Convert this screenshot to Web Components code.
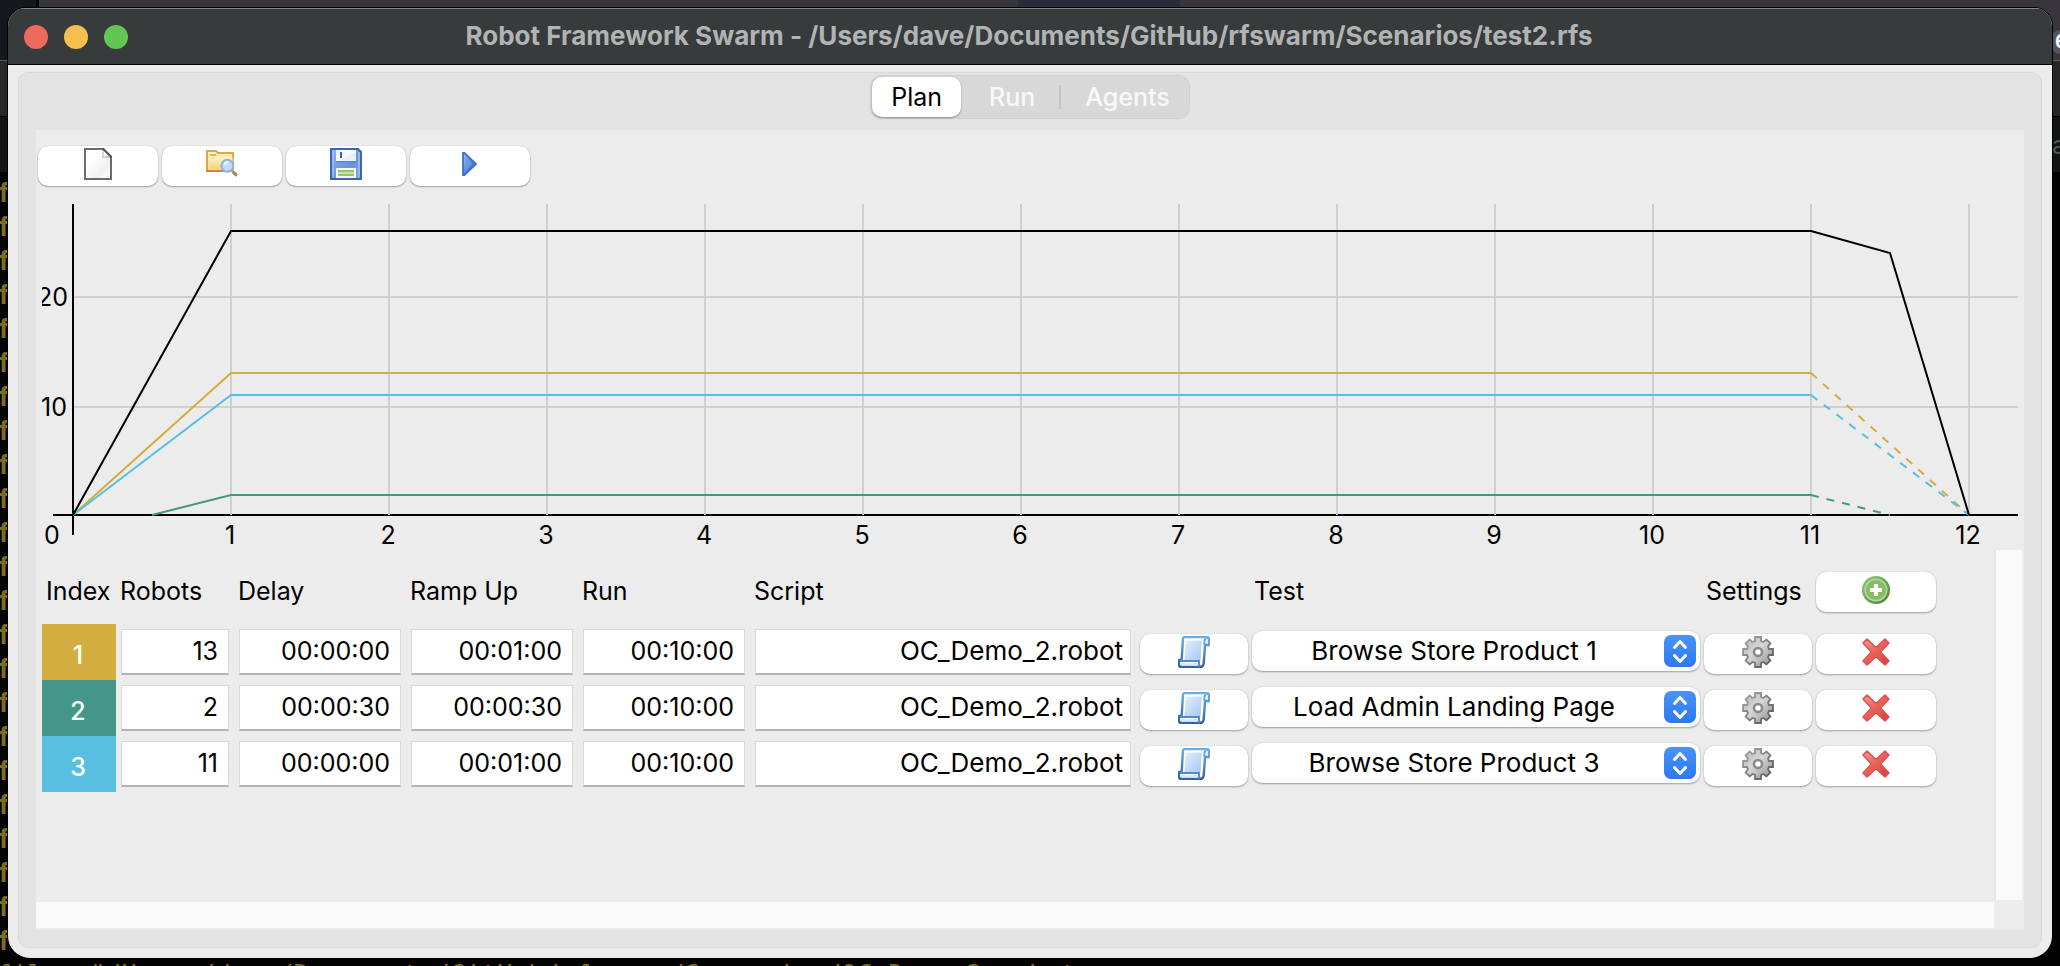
<!DOCTYPE html>
<html lang="en">
<head>
<meta charset="utf-8">
<title>Robot Framework Swarm</title>
<style>
html, body { margin: 0; height: 100%; }
body { box-sizing: border-box; padding: 8px; background: #000; overflow: hidden; font-family: Inter, Roboto, "Liberation Sans", sans-serif; font-size: 25px; line-height: 32px; color: #000; display: flex; }
</style>
</head>
<body>
<desktop-backdrop></desktop-backdrop>
<app-window heading="Robot Framework Swarm - /Users/dave/Documents/GitHub/rfswarm/Scenarios/test2.rfs">
  <tab-book>
    <tool-bar>
      <icon-button icon="new" label="New"></icon-button>
      <icon-button icon="open" label="Open"></icon-button>
      <icon-button icon="save" label="Save"></icon-button>
      <icon-button icon="play" label="Play"></icon-button>
    </tool-bar>
    <plan-chart></plan-chart>
    <scroll-pane><scenario-table></scenario-table></scroll-pane>
  </tab-book>
</app-window>
<script>
const icons = {
  new: `<defs><linearGradient id="g" x1="0" y1="0" x2="1" y2="1"><stop offset=".3" stop-color="#fff"/><stop offset=".7" stop-color="#f1f1f1"/><stop offset="1" stop-color="#fff"/></linearGradient></defs>
    <path d="M1.5.5h9l4 4v11h-13z" fill="url(#g)" stroke="#6c6c6c"/><path d="M10.5 1v3.500h3.500" fill="#fff" stroke="#c4c4c4" stroke-width=".7"/><path d="M10 .5h.7L14.500 4.300V5" fill="none" stroke="#555"/>`,
  open: `<defs><linearGradient id="g" x1="0" y1="0" x2="0" y2="1"><stop offset="0" stop-color="#fdf3cf"/><stop offset="1" stop-color="#f4cd62"/></linearGradient></defs>
    <path d="M.5 11.500V1.500h4.500l1 1h7.500v9z" fill="url(#g)" stroke="#dda748"/><path d="M2 3.500h3M6 5h6" stroke="#e3b75b" fill="none"/><path d="M1.500 6h3l1-1.200h7.500V11H1.500z" fill="url(#g)" stroke="#fff3c4" stroke-width=".5"/><path d="M0 11.500h10" stroke="#cf8433"/>
    <circle cx="10.700" cy="8.900" r="3" fill="#c4daf5" stroke="#8fb2e3"/><path d="M9.200 8.500q.5-1.500 2-1.500" stroke="#eef6ff" fill="none"/><path d="M12.800 11.300l1 1" stroke="#9a9a9a"/><path d="M13.600 12.100l1.800 1.700" stroke="#b07d4f" stroke-width="1.600"/>`,
  save: `<defs><linearGradient id="g" x1="0" y1="0" x2="1" y2="1"><stop offset="0" stop-color="#8db3ea"/><stop offset=".6" stop-color="#6a94d8"/><stop offset="1" stop-color="#86a9e2"/></linearGradient></defs>
    <path d="M.5.5h13.500l1.500 1.500v13.500H.5z" fill="url(#g)" stroke="#3a66b5"/><path d="M1.500 1.500v13M14.500 2v12.500" stroke="#9dbdf0" stroke-width=".8"/><path d="M3 1h10v5.500H3z" fill="#e9effa"/><path d="M3 3l4-2h6v1L5 6.500H3z" fill="#fff" opacity=".6"/><path d="M5.500 2v3" stroke="#3b5ea4"/><path d="M3 6.800h10" stroke="#5682cc" stroke-width=".6"/>
    <path d="M3 10h10v5H3z" fill="#fbfdf8"/><path d="M4 11.500h8M4 13.500h8" stroke="#96c66c"/><path d="M4 12.500h8" stroke="#c7e2ad"/>`,
  play: `<defs><linearGradient id="g" x1="0" y1="0" x2="1" y2="1"><stop offset="0" stop-color="#a5c8f4"/><stop offset=".6" stop-color="#4b80da"/><stop offset="1" stop-color="#2a5cc4"/></linearGradient></defs>
    <path d="M4.500 2.500h.7L11 8l-5.800 5.500h-.7z" fill="url(#g)" stroke="#3e6fd0" stroke-width=".9"/><path d="M5.500 4v7.500L9 8z" fill="#6d9ae4" opacity=".7"/>`,
  script: `<defs><linearGradient id="g" x1="0" y1="0" x2="0" y2="1"><stop offset="0" stop-color="#66afe5"/><stop offset="1" stop-color="#35629f"/></linearGradient><linearGradient id="h" x1="0" y1="0" x2="1" y2="1"><stop offset="0" stop-color="#e6f1fd"/><stop offset=".5" stop-color="#c2dbf8"/><stop offset="1" stop-color="#a9caf3"/></linearGradient></defs>
    <path d="M2.500 1.200Q2.700.5 3.500.5h10.700q1.300 0 1.300 1.400V4.500H13.500l-.6 8.700q-.2 2.300-1.700 2.300H1.500Q.5 15.500.5 14v-2h1.300z" fill="#fff" stroke="url(#g)" stroke-width="1.200"/>
    <path d="M3.800 2.200h8.200l-.7 9.800H3.200z" fill="url(#h)"/><path d="M13.300 4.500l-.1-2q.1-1 1-1" fill="none" stroke="#5fa1dc"/><path d="M1 12.500h9.500v1.500q0 .8.700 1.200" fill="none" stroke="#5d87c4"/><path d="M1.500 14h8.500" stroke="#d8e7fa"/>`,
  gear: `<defs><linearGradient id="g" x1="0" y1="0" x2="1" y2="1"><stop offset="0" stop-color="#b5b5b5"/><stop offset=".45" stop-color="#d6d6d6"/><stop offset="1" stop-color="#8a8a8a"/></linearGradient><linearGradient id="h" x1="0" y1="0" x2="1" y2="1"><stop offset="0" stop-color="#ababab"/><stop offset="1" stop-color="#555"/></linearGradient></defs>
    <path d="M6.500.5h3v2l1.200.5 1.500-1.300 2 2L13 5.300l.5 1.200h2v3h-2l-.5 1.200 1.200 1.500-2 2-1.500-1.200-1.200.5v2h-3v-2l-1.200-.5-1.500 1.200-2-2L3 10.700l-.5-1.200h-2v-3h2L3 5.300 1.800 3.700l2-2L5.300 3l1.200-.5z" fill="url(#g)" stroke="url(#h)" stroke-width=".9"/><circle cx="8" cy="8" r="2" fill="#fff" stroke="#8b8b8b" stroke-width="1.300"/>`,
  remove: `<defs><linearGradient id="g" x1="0" y1="0" x2="1" y2="1"><stop offset="0" stop-color="#f39a96"/><stop offset=".5" stop-color="#e8605b"/><stop offset="1" stop-color="#d63a34"/></linearGradient></defs>
    <path d="M3.500 1.500L8 5.800l4.500-4.300 2 2L10.300 8l4.200 4.500-2 2L8 10.300l-4.500 4.200-2-2L5.700 8 1.500 3.500z" fill="url(#g)" stroke="#df534e" stroke-width=".8" stroke-linejoin="round"/>`,
  add: `<defs><linearGradient id="g" x1="0" y1="0" x2="1" y2="1"><stop offset="0" stop-color="#9dc77f"/><stop offset="1" stop-color="#457f34"/></linearGradient></defs>
    <circle cx="8" cy="8" r="7" fill="url(#g)"/><circle cx="8" cy="8" r="5.400" fill="#84bd63" stroke="#b0d698" stroke-width=".8"/><path d="M8 5v6M5 8h6" stroke="#fff" stroke-width="2"/>`
};

function define(name, html, setup) {
  const template = document.createElement('template');
  template.innerHTML = html;
  customElements.define(name, class extends HTMLElement {
    connectedCallback() {
      if (this.shadowRoot) return;
      this.attachShadow({ mode: 'open' }).append(template.content.cloneNode(true));
      if (setup) setup(this, this.shadowRoot);
    }
  });
}

/* Other windows and the terminal behind the main window */
define('desktop-backdrop', `<style>
  :host { position: absolute; inset: 0; overflow: hidden; color: #7c6c1d; font: 26px/34px "DejaVu Sans Mono", monospace; white-space: pre; display: flex; flex-direction: column; }
  .top, .bar, .tabs { flex: none; }
  .top { height: 60px; background: linear-gradient(90deg, #14181d 36px, #000 36px, #000 39px, #38353d 39px, #38353d 1018px, #2a2b3b 1018px, #2a2b3b 1180px, #38353d 1180px); display: flex; justify-content: flex-end; align-items: center; }
  .bar { height: 55px; background: #252827; border-top: 1px solid #5a5c5c; border-bottom: 1px solid #000; }
  .tabs { height: 55px; background: #131515; display: flex; justify-content: flex-end; align-items: center; color: #555; font: 25px/32px Inter, sans-serif; }
  .tabs span { width: 8px; overflow: hidden; }
  .badge { width: 8px; height: 24px; overflow: hidden; background: #55545f; color: #fff; font: 700 19px/24px Inter, sans-serif; margin-top: 24px; text-indent: 3px; border-radius: 8px 0 0 8px; }
  .terminal { background: #030303; flex: 1; min-height: 0; padding-top: 4px; }
  .terminal div { height: 34px; text-indent: -4px; font-weight: 700; }
  .terminal div:last-child { font-weight: 400; }
</style>
<div class="top"><span class="badge">6</span></div><div class="bar"></div><div class="tabs"><span>a</span></div>
<div class="terminal"></div>`, (host, root) => {
  const term = root.querySelector('.terminal');
  for (let i = 0; i < 24; i++) {
    const line = document.createElement('div');
    line.textContent = i < 23 ? 'f' : 'file: "/Users/dave/Documents/GitHub/rfswarm/Scenarios/OC_Demo_2.robot';
    term.append(line);
  }
});

define('app-window', `<style>
  :host { position: relative; flex: 1; display: flex; flex-direction: column; border-radius: 18px 18px 22px 22px; background: #ececec; overflow: hidden; box-shadow: 0 0 0 1px #000; }
  header { height: 57px; box-sizing: border-box; background: #383b3b; border-top: 1px solid #868888; border-bottom: 1px solid #000; display: grid; grid-template-columns: 1fr auto 1fr; align-items: center; padding: 0 18px 0 16px; }
  .lights { display: flex; gap: 16px; }
  .lights button { width: 24px; height: 24px; border: 0; padding: 0; border-radius: 50%; }
  .close { background: #ec6a5e; } .min { background: #f5bf4f; } .max { background: #62c655; }
  h1 { margin: 0; padding-bottom: 2px; font-size: 26px; line-height: 32px; font-weight: 700; color: #b0b4b4; white-space: nowrap; }
  main { flex: 1; display: flex; padding: 7px 10px 10px; }
</style>
<header><div class="lights"><button class="close" aria-label="Close"></button><button class="min" aria-label="Minimise"></button><button class="max" aria-label="Zoom"></button></div><h1></h1></header>
<main><slot></slot></main>`, (host, root) => {
  root.querySelector('h1').textContent = host.getAttribute('heading');
});

define('tab-book', `<style>
  :host { flex: 1; min-width: 0; box-sizing: border-box; display: flex; flex-direction: column; background: #e3e3e3; border: 1px solid #d9d9d9; border-radius: 10px; padding: 2px 17px 17px; }
  nav { align-self: center; display: flex; align-items: center; height: 44px; border-radius: 12px; background: #d8d8d8; box-shadow: inset 0 0 1px 1px #d0d0d0; margin-bottom: 11px; }
  button { font: inherit; border: 0; background: none; padding: 0 20px 0 24px; height: 40px; color: #f8f8f8; font-weight: 500; }
  button[aria-selected=true] { background: #fff; color: #000; font-weight: 400; border-radius: 10px; padding: 0 19px; margin-left: 2px; box-shadow: 0 1px 2px rgba(0,0,0,.35); }
  nav button:nth-child(2) { padding: 0 24px 0 28px; }
  .rule { width: 2px; height: 24px; background: #c4c4c4; }
  section { flex: 1; background: #ececec; display: flex; flex-direction: column; padding-top: 16px; }
</style>
<nav role="tablist"><button role="tab" aria-selected="true">Plan</button><button role="tab" aria-selected="false">Run</button><span class="rule"></span><button role="tab" aria-selected="false">Agents</button></nav>
<section role="tabpanel"><slot></slot></section>`);

define('tool-bar', `<style>
  :host { display: flex; gap: 4px; padding: 0 2px; margin-bottom: 18px; }
  ::slotted(icon-button) { width: 120px; }
</style><slot></slot>`);

define('icon-button', `<style>
  :host { display: block; height: 40px; }
  button { display: flex; justify-content: center; width: 100%; height: 40px; border: 0; border-radius: 10px; background: #fff; padding: 2px 0 6px; box-shadow: 0 1px 2px rgba(0,0,0,.32), 0 0 1px rgba(0,0,0,.2); }
  svg { width: 32px; height: 32px; }
</style><button><svg viewBox="0 0 16 16" aria-hidden="true"></svg></button>`, (host, root) => {
  root.querySelector('svg').innerHTML = icons[host.getAttribute('icon')];
  root.querySelector('button').setAttribute('aria-label', host.getAttribute('label'));
});

/* Robots over time: one line per scenario row, and their total in black */
define('plan-chart', `<style>
  :host { display: block; height: 346px; margin: 0 4px 0 6px; }
  svg { display: block; width: 100%; height: 346px; overflow: hidden; }
  text { font-size: 25px; fill: #000; }
  polyline, path { fill: none; stroke-width: 2; }
</style><svg role="img" aria-label="Planned robots over time"></svg>`, (host, root) => {
  const svg = root.querySelector('svg');
  const draw = () => {
    const width = host.clientWidth, left = 31, base = 311;
    const step = Math.round((width - 82) / 12);
    const x = minute => left + minute * step;
    const line = (colour, points, dash) => `<polyline stroke="${colour}" ${dash ? 'stroke-dasharray="8 8"' : ''} points="${points.map(([m, h]) => x(m) + ',' + (base - h)).join(' ')}"/>`;
    let out = `<path stroke="#000" d="M11 ${base}H${width - 2}M${left} 0V331"/>`;
    for (let m = 1; m <= 12; m++) out += `<path stroke="#cfcfcf" d="M${x(m)} 0V${base}"/><text x="${x(m) - 1}" y="340" text-anchor="middle">${m}</text>`;
    out += `<path stroke="#cfcfcf" d="M${left + 1} 203H${width - 2}M${left + 1} 93H${width - 2}"/>`;
    out += `<text x="26" y="102" text-anchor="end">20</text><text x="25" y="212" text-anchor="end">10</text><text x="10" y="340" text-anchor="middle">0</text>`;
    out += line('#d1ae3f', [[0, 0], [1, 142], [11, 142]]) + line('#d1ae3f', [[11, 142], [12, 0]], true);
    out += line('#449788', [[.5, 0], [1, 20], [11, 20]]) + line('#449788', [[11, 20], [11.5, 0]], true);
    out += line('#59bfe1', [[0, 0], [1, 120], [11, 120]]) + line('#59bfe1', [[11, 120], [12, 0]], true);
    out += line('#000', [[0, 0], [1, 284], [11, 284], [11.5, 262], [12, 0]]);
    svg.innerHTML = out;
  };
  draw();
  new ResizeObserver(draw).observe(host);
});

define('scroll-pane', `<style>
  :host { flex: 1; display: grid; grid-template: 1fr 30px / 1fr 30px; }
  .view { padding: 10px 6px 0; min-width: 0; overflow: hidden; }
  .v { background: #fafafa; border-left: 2px solid #e6e6e6; margin-right: 2px; }
  .h { background: #fafafa; margin: 2px 0; }
</style><div class="view"><slot></slot></div><div class="v"></div><div class="h"></div>`);

define('select-box', `<style>
  :host { display: grid; height: 40px; }
  select, svg { grid-area: 1 / 1; }
  select { appearance: none; width: 100%; height: 40px; border: 0; border-radius: 10px; background: #fff; color: #000; padding: 0 44px 0 0; font: inherit; text-align: center; text-align-last: center; box-shadow: 0 1px 2px rgba(0,0,0,.32), 0 0 1px rgba(0,0,0,.2); }
  svg { justify-self: end; align-self: center; width: 32px; height: 32px; margin-right: 4px; pointer-events: none; z-index: 1; }
</style><select aria-label="Test"></select>
<svg viewBox="0 0 32 32"><defs><linearGradient id="b" x1="0" y1="0" x2="0" y2="1"><stop offset="0" stop-color="#4b93f8"/><stop offset="1" stop-color="#2c78f2"/></linearGradient></defs><rect width="32" height="32" rx="7" fill="url(#b)"/><path d="M10.500 12.500L16 6.500l5.500 6M10.500 20.500l5.500 6 5.500-6" fill="none" stroke="#fff" stroke-width="3" stroke-linecap="round" stroke-linejoin="round"/></svg>`, (host, root) => {
  root.querySelector('select').append(new Option(host.getAttribute('value')));
});

define('scenario-table', `<style>
  :host { display: block; }
  table { table-layout: fixed; border-collapse: collapse; width: 1896px; max-width: 100%; }
  th { height: 62px; padding: 0 0 2px 4px; text-align: left; font-weight: 400; white-space: nowrap; }
  th.add { padding: 0 2px; }
  td { height: 56px; padding: 0; vertical-align: top; }
  .index { vertical-align: middle; text-align: center; color: #fff; font-weight: 500; padding: 6px 2px 0 0; height: 50px; }
  .field { padding: 5px 5px 0; height: 51px; }
  .press { padding: 10px 2px 0; height: 46px; }
  .script { padding-left: 4px; }
  .test { padding: 7px 2px 0; height: 49px; font-size: 26px; }
  input { display: block; box-sizing: border-box; width: 100%; height: 46px; border: 1px solid #dadada; border-bottom: 2px solid #b4b4b4; border-radius: 0; background: #fff; padding: 0 10px 2px 4px; text-align: right; font: inherit; color: #000; }
  input.file { font-size: 26px; padding-right: 7px; }
</style>
<table>
<colgroup><col style="width:74px"><col style="width:118px"><col style="width:172px"><col style="width:172px"><col style="width:172px"><col style="width:386px"><col style="width:114px"><col style="width:452px"><col style="width:112px"><col style="width:124px"></colgroup>
<thead><tr><th>Index</th><th>Robots</th><th>Delay</th><th>Ramp Up</th><th>Run</th><th>Script</th><th></th><th>Test</th><th>Settings</th><th class="add"><icon-button icon="add" label="Add row"></icon-button></th></tr></thead>
<tbody></tbody>
</table>`, (host, root) => {
  const rows = [
    ['#d1ae3f', 13, '00:00:00', '00:01:00', 'Browse Store Product 1'],
    ['#449788', 2, '00:00:30', '00:00:30', 'Load Admin Landing Page'],
    ['#59bfe1', 11, '00:00:00', '00:01:00', 'Browse Store Product 3']
  ];
  const field = (name, value, extra = '') => `<td class="field"><input class="${extra}" aria-label="${name}" value="${value}"></td>`;
  root.querySelector('tbody').innerHTML = rows.map(([colour, robots, delay, ramp, test], i) => `<tr>
    <td class="index" style="background:${colour}">${i + 1}</td>
    ${field('Robots', robots)}${field('Delay', delay)}${field('Ramp Up', ramp)}${field('Run', '00:10:00')}${field('Script', 'OC_Demo_2.robot', 'file')}
    <td class="press script"><icon-button icon="script" label="Choose script"></icon-button></td>
    <td class="test"><select-box value="${test}"></select-box></td>
    <td class="press"><icon-button icon="gear" label="Settings"></icon-button></td>
    <td class="press"><icon-button icon="remove" label="Remove row"></icon-button></td></tr>`).join('');
});
</script>
</body>
</html>
